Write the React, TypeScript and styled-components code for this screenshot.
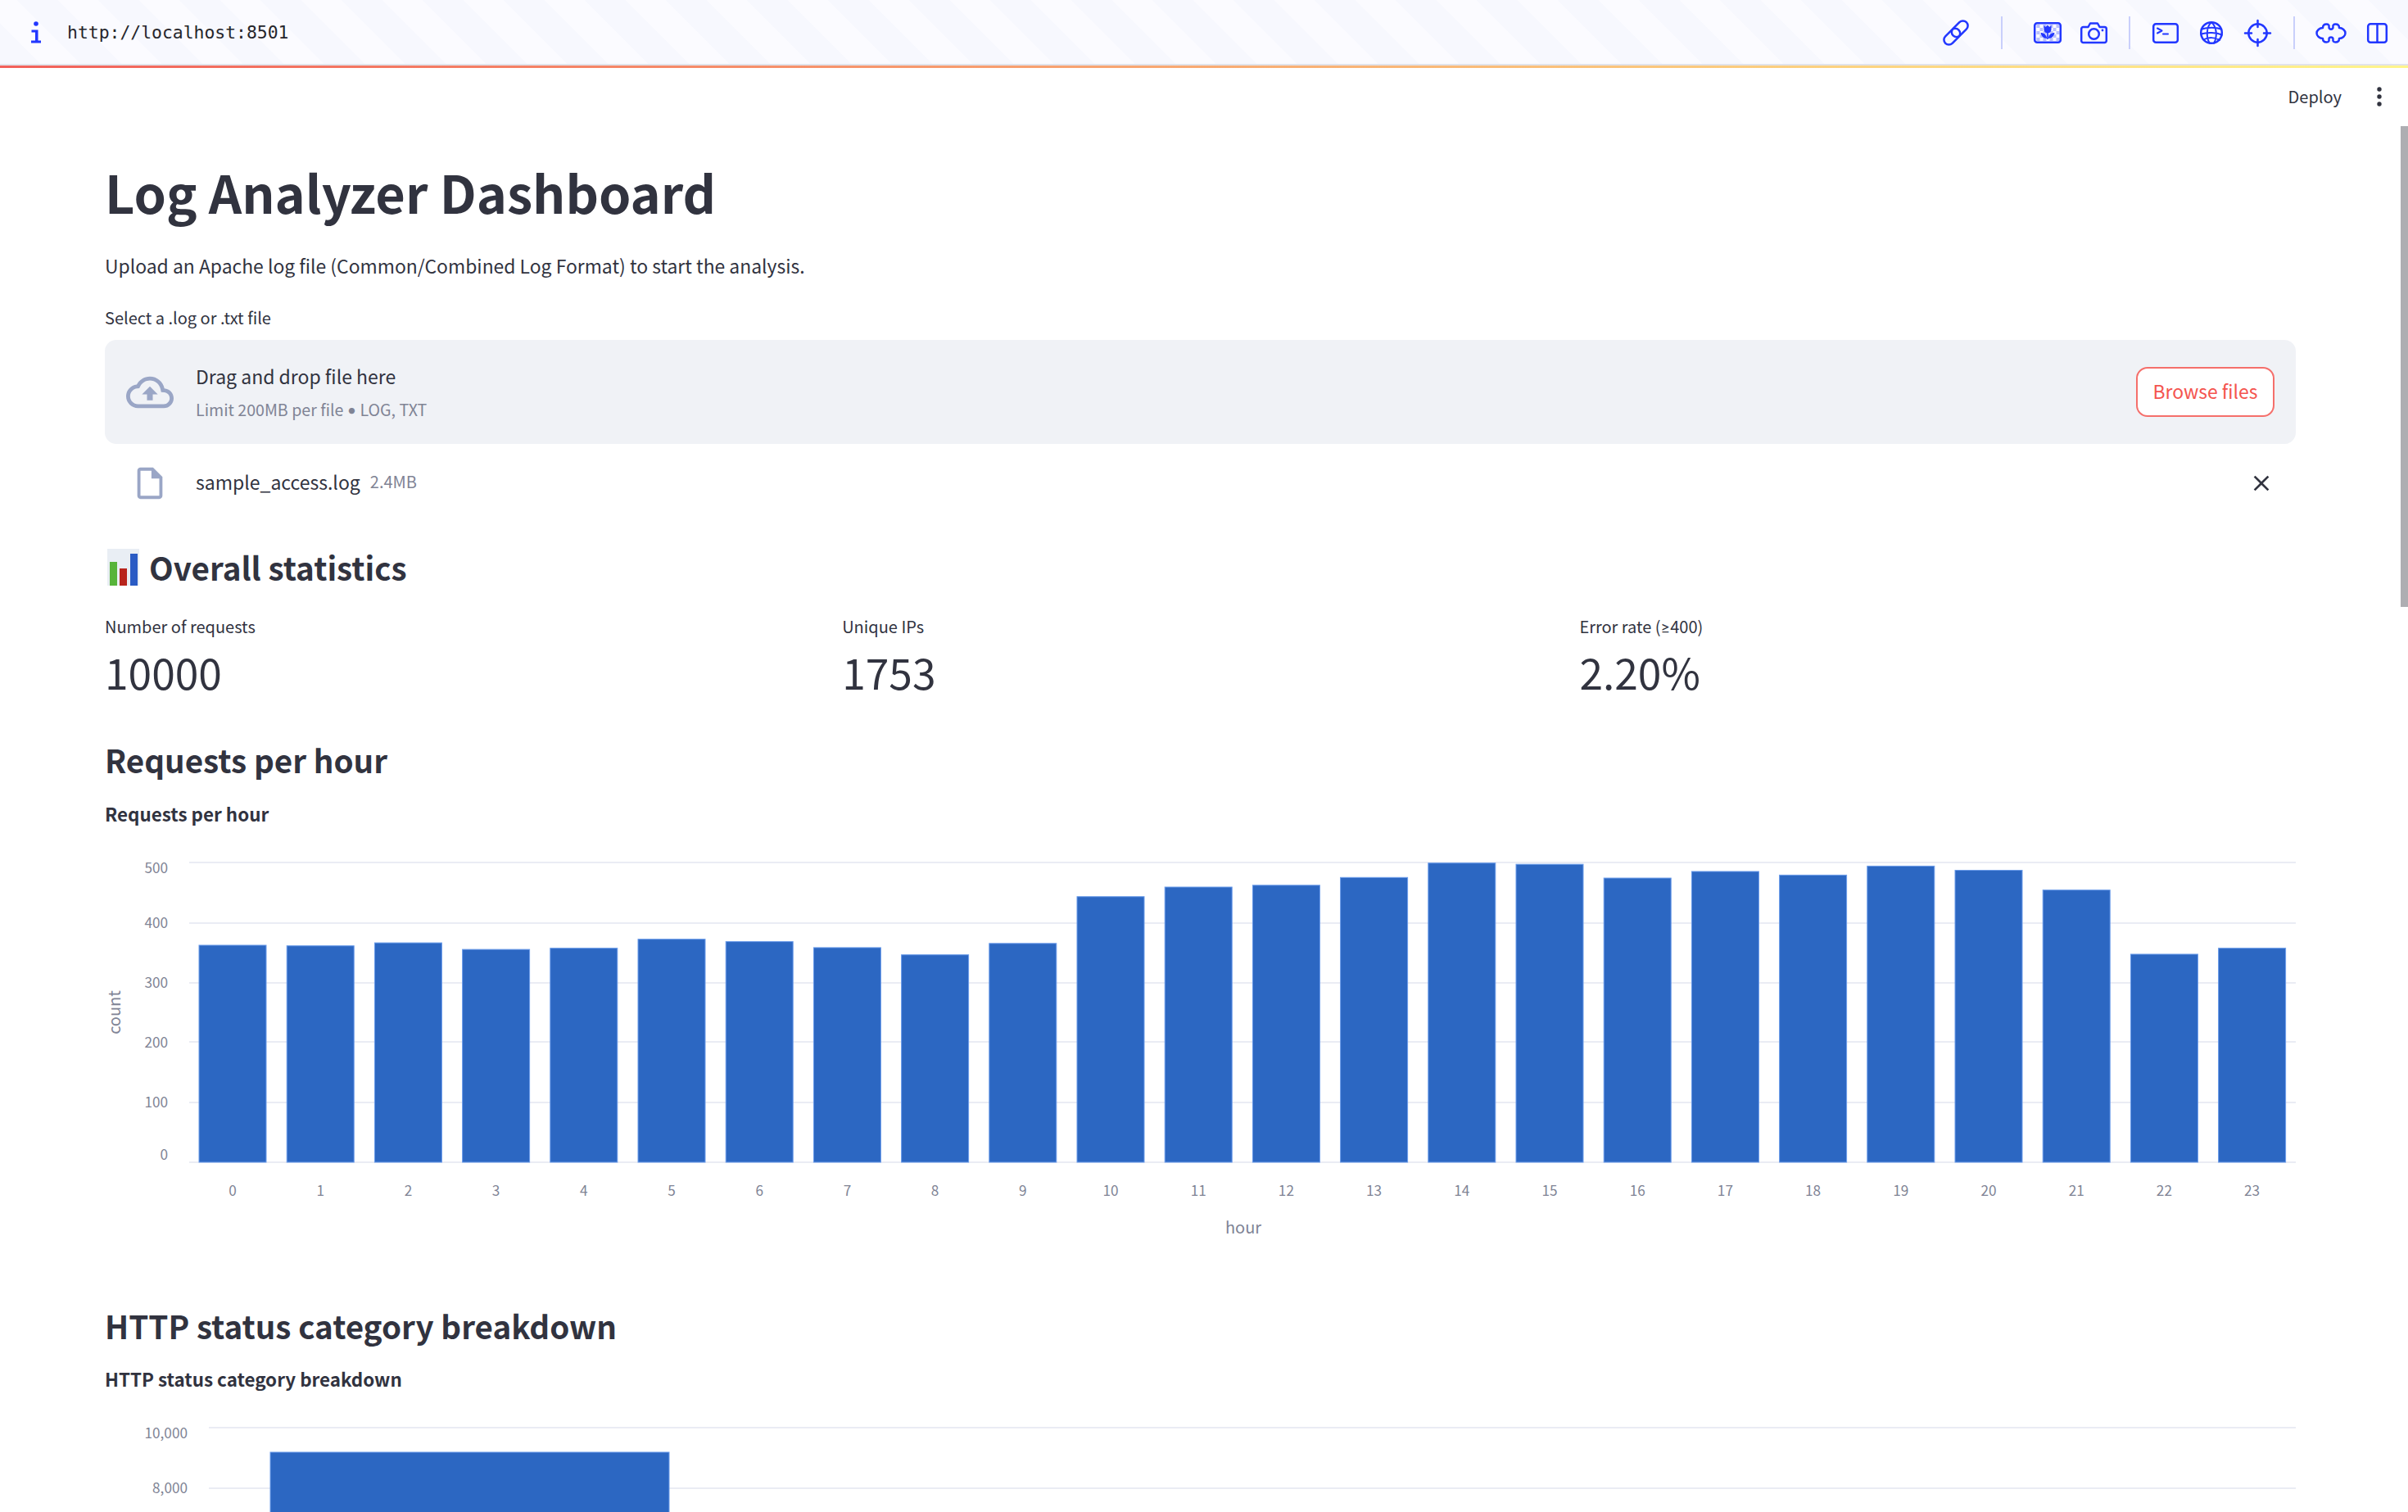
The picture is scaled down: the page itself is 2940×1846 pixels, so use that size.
import React from 'react'
import styled, { createGlobalStyle } from 'styled-components'

const sans = '"Noto Sans CJK SC", "Source Sans Pro", "Lato", sans-serif'
const textColor = '#31333f'
const hintColor = '#808495'
const toolBlue = '#2237ff'
const iconGrey = '#9aa6c6'
const barBlue = '#2c67c2'

const GlobalStyle = createGlobalStyle`
  html, body {
    margin: 0;
    padding: 0;
    background: #fff;
    overflow: hidden;
  }
  * {
    box-sizing: border-box;
  }
`

const Page = styled.div`
  position: relative;
  width: 2940px;
  height: 1846px;
  overflow: hidden;
  font-family: ${sans};
  color: ${textColor};
`
const Toolbar = styled.header`
  display: flex;
  align-items: center;
  height: 78px;
  padding: 2px 10px 0 0;
  background: repeating-linear-gradient(
    45deg,
    #f7f8fe 0 35px,
    #fbfbff 35px 70px
  );
`
const UrlIcon = styled.svg`
  width: 14px;
  height: 28px;
  margin-left: 37px;
  flex: none;
`
const Url = styled.span`
  margin-left: 31px;
  font-family: 'DejaVu Sans Mono', monospace;
  font-size: 21.4px;
  line-height: 30px;
  color: #26262b;
`
const ToolGroup = styled.div`
  display: flex;
  align-items: center;
  margin-left: auto;
`
const ToolButton = styled.div`
  display: flex;
  align-items: center;
  justify-content: center;
  width: 56px;
  height: 56px;
  svg {
    fill: none;
    stroke: ${toolBlue};
    stroke-width: 2.5;
    stroke-linecap: round;
    stroke-linejoin: round;
    overflow: visible;
  }
`
const ToolDivider = styled.span<{ $left: number; $right: number }>`
  width: 2px;
  height: 40px;
  margin: 0 ${({ $right }) => $right}px 0 ${({ $left }) => $left}px;
  background: #c9cffb;
`
const Decoration = styled.div`
  height: 5px;
  border-top: 2px solid #e2e3ea;
  background: linear-gradient(90deg, #f2605a, #fff58c);
`
const DeployRow = styled.div`
  display: flex;
  align-items: center;
  justify-content: flex-end;
  height: 70px;
  padding-right: 32px;
`
const DeployLabel = styled.span`
  font-size: 20px;
  line-height: 30px;
`
const MenuDots = styled.svg`
  width: 6px;
  height: 24px;
  margin-left: 43px;
  fill: ${textColor};
`
const Main = styled.main`
  padding: 0 137px 0 128px;
`
const Title = styled.h1`
  margin: 36px 0 0;
  font-size: 63px;
  font-weight: 700;
  line-height: 90px;
`
const Intro = styled.p`
  margin: 25px 0 0;
  font-size: 22.9px;
  line-height: 40px;
`
const FieldLabel = styled.label`
  display: block;
  margin-top: 29px;
  font-size: 20px;
  line-height: 30px;
`
const DropZone = styled.div`
  display: flex;
  align-items: center;
  height: 127px;
  margin-top: 12px;
  padding: 0 26px;
  border-radius: 14px;
  background: #f0f2f6;
`
const CloudIcon = styled.svg`
  width: 58px;
  height: 58px;
  margin-right: 27px;
  fill: ${iconGrey};
  flex: none;
`
const DropText = styled.div`
  display: flex;
  flex-direction: column;
`
const DropTitle = styled.span`
  font-size: 23px;
  line-height: 36px;
`
const DropHint = styled.span`
  margin-top: 8px;
  font-size: 19.6px;
  line-height: 30px;
  color: ${hintColor};
`
const NarrowGlyph = styled.span`
  font-family: 'Lato', sans-serif;
`
const BrowseButton = styled.button`
  height: 61px;
  width: 169px;
  margin-left: auto;
  padding: 0 0 3px;
  border: 2px solid #f56f6b;
  border-radius: 14px;
  background: #fff;
  color: #f4544f;
  font-family: ${sans};
  font-size: 22.9px;
`
const FileRow = styled.div`
  display: flex;
  align-items: center;
  height: 76px;
  margin-top: 10px;
  padding: 0 26px 0 32px;
`
const FileIcon = styled.svg`
  width: 46px;
  height: 46px;
  margin-right: 33px;
  fill: ${iconGrey};
  flex: none;
`
const FileName = styled.span`
  margin-bottom: 4px;
  font-size: 23px;
  line-height: 32px;
`
const FileSize = styled.span`
  margin: 0 0 4px 12px;
  font-size: 20px;
  line-height: 32px;
  color: ${hintColor};
`
const CloseIcon = styled.svg`
  width: 32px;
  height: 32px;
  margin-left: auto;
  fill: ${textColor};
`
const Subheading = styled.h3<{ $top: number }>`
  display: flex;
  align-items: center;
  margin: ${({ $top }) => $top}px 0 0;
  font-size: 38.6px;
  font-weight: 700;
  line-height: 60px;
`
const ChartEmoji = styled.svg`
  width: 39px;
  height: 45px;
  margin: 0 12px 0 3px;
  flex: none;
`
const Metrics = styled.section`
  display: grid;
  grid-template-columns: repeat(3, 1fr);
  column-gap: 25.6px;
  margin-top: 28px;
`
const MetricLabel = styled.div`
  font-size: 20px;
  line-height: 30px;
`
const MetricValue = styled.div`
  margin-top: 5px;
  font-size: 51.5px;
  line-height: 70px;
`
const ChartTitle = styled.div<{ $top: number }>`
  margin-top: ${({ $top }) => $top}px;
  font-size: 22.4px;
  font-weight: 700;
  line-height: 33px;
`
const ChartSvg = styled.svg`
  display: block;
  width: 2675px;
`
const GridLine = styled.line`
  stroke: #eaecf4;
  stroke-width: 2;
`
const Bar = styled.rect`
  fill: ${barBlue};
  stroke: #6b9cea;
  stroke-width: 1;
`
const AxisText = styled.text`
  font-family: ${sans};
  font-size: 17.2px;
  fill: ${hintColor};
`
const AxisTitle = styled.text`
  font-family: ${sans};
  font-size: 20px;
  fill: ${hintColor};
`
const ScrollThumb = styled.div`
  position: absolute;
  top: 154px;
  right: 0;
  width: 9px;
  height: 587px;
  background: #aeaeb2;
`

const hourCounts = [
  362, 361, 366, 355, 357, 372, 368, 358, 346, 365, 443, 459, 462, 475, 499,
  497, 474, 485, 479, 494, 487, 454, 347, 357,
]
const yTicks = [
  { value: 500, lineY: 43, labelY: 50 },
  { value: 400, lineY: 117, labelY: 117 },
  { value: 300, lineY: 190, labelY: 190 },
  { value: 200, lineY: 262, labelY: 263 },
  { value: 100, lineY: 336, labelY: 336 },
  { value: 0, lineY: 409, labelY: 400 },
]
const BAR_SCALE = 0.732
const BASELINE = 409

const HourChart = () => (
  <ChartSvg height={520} viewBox="0 0 2675 520">
    {yTicks.map((t) => (
      <g key={t.value}>
        <GridLine x1={103} x2={2675} y1={t.lineY} y2={t.lineY} />
        <AxisText x={77} y={t.labelY + 6} textAnchor="end">
          {t.value}
        </AxisText>
      </g>
    ))}
    {hourCounts.map((count, hour) => {
      const h = count * BAR_SCALE
      const x = 115 + hour * 107.2
      return (
        <g key={hour}>
          <Bar x={x} y={BASELINE - h} width={82} height={h} />
          <AxisText x={x + 41} y={450} textAnchor="middle">
            {hour}
          </AxisText>
        </g>
      )
    })}
    <AxisTitle x={1390} y={496} textAnchor="middle">
      hour
    </AxisTitle>
    <AxisTitle
      textAnchor="middle"
      transform="translate(19 226) rotate(-90)"
    >
      count
    </AxisTitle>
  </ChartSvg>
)

const StatusChart = () => (
  <ChartSvg height={170} viewBox="0 0 2675 170">
    <GridLine x1={127} x2={2675} y1={43} y2={43} />
    <GridLine x1={127} x2={2675} y1={117} y2={117} />
    <AxisText x={101} y={56} textAnchor="end">
      10,000
    </AxisText>
    <AxisText x={101} y={123} textAnchor="end">
      8,000
    </AxisText>
    <Bar x={202} y={73} width={487} height={120} />
  </ChartSvg>
)

const checkerCells: [number, number][] = []
for (let c = 0; c < 7; c++) {
  for (let r = 0; r < 5; r++) {
    if ((c + r) % 2 === 0) checkerCells.push([3.5 + c * 4, 3 + r * 4])
  }
}

const App = () => (
  <Page>
    <GlobalStyle />
    <Toolbar>
      <UrlIcon viewBox="0 0 14 28" fill={toolBlue}>
        <circle cx="7" cy="3" r="2.8" />
        <path d="M1.5 10.5h8v13h3.5v3H1v-3h5v-10H1.5z" />
      </UrlIcon>
      <Url>http://localhost:8501</Url>
      <ToolGroup>
        <ToolButton>
          <svg width="30" height="30" viewBox="0 0 30 30">
            <rect x="8.2" y="4.3" width="23" height="12" rx="6" transform="rotate(-45 19.7 10.3)" />
            <rect x="-1.2" y="13.7" width="23" height="12" rx="6" transform="rotate(-45 10.3 19.7)" />
          </svg>
        </ToolButton>
        <ToolDivider $left={27} $right={27} />
        <ToolButton>
          <svg width="34" height="26" viewBox="0 0 34 26">
            <g fill="#b9c0fb" stroke="none">
              {checkerCells.map(([x, y]) => (
                <rect key={`${x}-${y}`} x={x} y={y} width="4" height="4" />
              ))}
            </g>
            <rect x="1.2" y="1.2" width="31.6" height="23.6" rx="3" />
            <g fill={toolBlue} stroke="none">
              <path d="M12.5 4l2.2 2 2.3-2.5 2.3 2.5 2.2-2v5a4.500 4.500 0 0 1-9 0z" />
              <rect x="16.2" y="12" width="1.6" height="9" />
              <path d="M8.500 13c4 0 7 2.500 7.800 7-4.300 0-7-2.800-7.800-7zM25.500 13c-4 0-7 2.500-7.800 7 4.300 0 7-2.800 7.800-7z" />
            </g>
          </svg>
        </ToolButton>
        <ToolButton>
          <svg width="33" height="26" viewBox="0 0 33 26">
            <path d="M3.500 6h6l2.500-4.500h9L23.500 6h6a2.300 2.300 0 0 1 2.300 2.300v14.400a2.300 2.300 0 0 1-2.300 2.300h-26a2.300 2.300 0 0 1-2.300-2.300V8.300A2.300 2.300 0 0 1 3.500 6z" />
            <circle cx="16.500" cy="14.500" r="6.300" />
            <circle cx="27" cy="10" r="1.400" fill={toolBlue} stroke="none" />
          </svg>
        </ToolButton>
        <ToolDivider $left={15} $right={15} />
        <ToolButton>
          <svg width="32" height="25" viewBox="0 0 32 25">
            <rect x="1.200" y="1.200" width="29.600" height="22.600" rx="3" />
            <path d="M6 6.500l5.500 3L6 12.500M13 13.500h6" strokeWidth="2" />
          </svg>
        </ToolButton>
        <ToolButton>
          <svg width="28" height="28" viewBox="0 0 28 28">
            <circle cx="14" cy="14" r="12.800" />
            <path d="M14 1.200C8 6 7 20 12 26.800M14 1.200C20 6 22 18 17 26.800M2.500 9.500C9 7 20 7 25.500 9.500M1.500 15.500C9 13 20 13.500 26.800 16.500M4.500 22.500C10 19 19 19.500 24 23" strokeWidth="2" />
          </svg>
        </ToolButton>
        <ToolButton>
          <svg width="33" height="33" viewBox="0 0 33 33">
            <circle cx="16.500" cy="16.500" r="11.200" />
            <path d="M16.500 1v8M16.500 24v8M1 16.500h8M24 16.500h8" />
          </svg>
        </ToolButton>
        <ToolDivider $left={16} $right={16} />
        <ToolButton>
          <svg width="38" height="25" viewBox="0 0 38 25">
            <path d="M9 6C9 3 11 1.500 13.500 1.500C16 1.500 17 3 16.500 5C16.300 8.500 21.700 8.500 21.500 5C21 3 22 1.500 24.500 1.500C27 1.500 29 3 29 6C33 6 36.500 9 36.500 12.500C36.500 16 33 19 29 19C29 22 27 23.500 24.500 23.500C22 23.500 21 22 21.500 20C21.700 16.500 16.300 16.500 16.500 20C17 22 16 23.500 13.500 23.500C11 23.500 9 22 9 19C5 19 1.500 16 1.500 12.500C1.500 9 5 6 9 6Z" />
          </svg>
        </ToolButton>
        <ToolButton>
          <svg width="25" height="25" viewBox="0 0 25 25">
            <rect x="1.200" y="1.200" width="22.600" height="22.600" rx="3" />
            <path d="M12.500 1.200v22.600" />
          </svg>
        </ToolButton>
      </ToolGroup>
    </Toolbar>
    <Decoration />
    <DeployRow>
      <DeployLabel>Deploy</DeployLabel>
      <MenuDots viewBox="0 0 6 24">
        <circle cx="3" cy="3" r="2.700" />
        <circle cx="3" cy="12" r="2.700" />
        <circle cx="3" cy="21" r="2.700" />
      </MenuDots>
    </DeployRow>
    <Main>
      <Title>Log Analyzer Dashboard</Title>
      <Intro>
        Upload an Apache log file (Common/Combined Log Format) to start the
        analysis.
      </Intro>
      <FieldLabel>Select a .log or .txt file</FieldLabel>
      <DropZone>
        <CloudIcon viewBox="0 0 24 24">
          <path d="M19.350 10.040C18.670 6.590 15.640 4 12 4 9.110 4 6.600 5.640 5.350 8.040 2.340 8.360 0 10.910 0 14c0 3.310 2.690 6 6 6h13c2.760 0 5-2.240 5-5 0-2.640-2.050-4.780-4.650-4.960zM19 18H6c-2.210 0-4-1.790-4-4 0-2.050 1.530-3.760 3.560-3.970l1.070-.11.5-.95C8.080 7.140 9.940 6 12 6c2.620 0 4.880 1.860 5.390 4.430l.3 1.500 1.530.11c1.560.1 2.780 1.410 2.780 2.960 0 1.650-1.350 3-3 3zM8 13h2.550v3h2.900v-3H16l-4-4z" />
        </CloudIcon>
        <DropText>
          <DropTitle>Drag and drop file here</DropTitle>
          <DropHint>
            Limit 200MB per file <NarrowGlyph>•</NarrowGlyph> LOG, TXT
          </DropHint>
        </DropText>
        <BrowseButton>Browse files</BrowseButton>
      </DropZone>
      <FileRow>
        <FileIcon viewBox="0 0 24 24">
          <path d="M14 2H6c-1.100 0-2 .9-2 2v16c0 1.100.9 2 2 2h12c1.100 0 2-.9 2-2V8l-6-6zm4 18H6V4h7v5h5v11z" />
        </FileIcon>
        <FileName>sample_access.log</FileName>
        <FileSize>2.4MB</FileSize>
        <CloseIcon viewBox="0 0 24 24">
          <path d="M19 6.410L17.590 5 12 10.590 6.410 5 5 6.410 10.590 12 5 17.590 6.410 19 12 13.410 17.590 19 19 17.590 13.410 12z" />
        </CloseIcon>
      </FileRow>
      <Subheading $top={34}>
        <ChartEmoji viewBox="0 0 39 45">
          <rect width="39" height="45" fill="#e9eef4" />
          <rect x="3" y="16" width="9" height="29" fill="#57b43a" />
          <rect x="15" y="24" width="9" height="21" fill="#b8241c" />
          <rect x="28" y="6" width="9" height="39" fill="#2a5bc4" />
        </ChartEmoji>
        Overall statistics
      </Subheading>
      <Metrics>
        <div>
          <MetricLabel>Number of requests</MetricLabel>
          <MetricValue>10000</MetricValue>
        </div>
        <div>
          <MetricLabel>Unique IPs</MetricLabel>
          <MetricValue>1753</MetricValue>
        </div>
        <div>
          <MetricLabel>
            Error rate (<NarrowGlyph>≥</NarrowGlyph>400)
          </MetricLabel>
          <MetricValue>2.20%</MetricValue>
        </div>
      </Metrics>
      <Subheading $top={42}>Requests per hour</Subheading>
      <ChartTitle $top={20}>Requests per hour</ChartTitle>
      <HourChart />
      <Subheading $top={58}>HTTP status category breakdown</Subheading>
      <ChartTitle $top={19}>HTTP status category breakdown</ChartTitle>
      <StatusChart />
    </Main>
    <ScrollThumb />
  </Page>
)

export default App
